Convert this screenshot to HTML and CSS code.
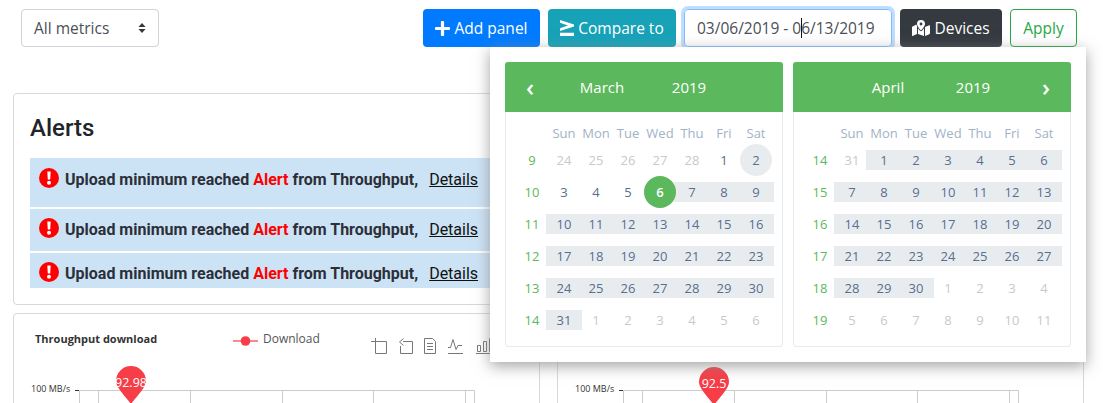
FILE: index.html
```html
<!DOCTYPE html>
<html lang="en">
<head>
<meta charset="utf-8">
<title>Dashboard</title>
<link rel="stylesheet" href="styles.css">
</head>
<body>
<div class="page">
  <header class="toolbar">
    <div class="select"><span>All metrics</span>
      <svg class="select-arrows" viewBox="0 0 8 10"><path d="M4 0l3.600 4H.4zM4 10L.4 6h7.200z"/></svg>
    </div>
    <div class="actions">
      <button class="btn btn-blue"><svg class="ico" viewBox="0 0 448 448"><path d="M416 176H272V32c0-17.670-14.330-32-32-32h-32c-17.670 0-32 14.330-32 32v144H32c-17.670 0-32 14.330-32 32v32c0 17.670 14.330 32 32 32h144v144c0 17.670 14.330 32 32 32h32c17.670 0 32-14.330 32-32V272h144c17.670 0 32-14.330 32-32v-32c0-17.670-14.330-32-32-32z"/></svg>Add panel</button>
      <button class="btn btn-teal"><svg class="ico ico-ge" viewBox="0 0 14 16"><path d="M0 0l14 4.500v2L0 11V8.300l8-2.800L0 2.700zM0 12.800h14V16H0z"/></svg>Compare to</button>
      <div class="range">03/06/2019 - 0<i class="caret"></i>6/13/2019</div>
      <button class="btn btn-dark"><svg class="ico ico-map" viewBox="0 0 18 16"><path d="M9 0a4 4 0 0 0-4 4c0 1.800 2.600 5 3.500 6.100a.6.6 0 0 0 1 0C10.400 9 13 5.800 13 4a4 4 0 0 0-4-4zm0 5.400A1.400 1.400 0 1 1 9 2.600a1.400 1.400 0 0 1 0 2.800zM.6 6.400A1 1 0 0 0 0 7.300v8.200c0 .4.400.6.700.5L5 14V6.100c-.3-.5-.5-1-.6-1.500zM9 11.200c-.5 0-.9-.2-1.200-.6-.6-.7-1.200-1.500-1.800-2.300V14l6 2V8.300c-.6.800-1.200 1.600-1.800 2.300-.3.400-.7.600-1.200.6zm8.300-6L13 7v9l4.400-1.800c.4-.1.600-.5.600-.9V5.700c0-.4-.4-.6-.7-.5z"/></svg>Devices</button>
      <button class="btn btn-apply">Apply</button>
    </div>
  </header>

  <main class="content">
    <section class="card alerts">
      <h3 class="alerts-title">Alerts</h3>
      <div class="alert alert-first">
        <svg class="alert-ico" viewBox="0 0 20 20"><circle cx="10" cy="10" r="10"/><path class="mark" d="M8.300 3.500h3.400l-.5 8h-2.400zM10 12.800a2 2 0 1 1 0 4 2 2 0 0 1 0-4z"/></svg>
        <p class="alert-text">Upload minimum reached <em>Alert</em> from Throughput,</p><a class="alert-link">Details</a>
      </div>
      <div class="alert alert-mid">
        <svg class="alert-ico" viewBox="0 0 20 20"><circle cx="10" cy="10" r="10"/><path class="mark" d="M8.300 3.500h3.400l-.5 8h-2.400zM10 12.800a2 2 0 1 1 0 4 2 2 0 0 1 0-4z"/></svg>
        <p class="alert-text">Upload minimum reached <em>Alert</em> from Throughput,</p><a class="alert-link">Details</a>
      </div>
      <div class="alert alert-last">
        <svg class="alert-ico" viewBox="0 0 20 20"><circle cx="10" cy="10" r="10"/><path class="mark" d="M8.300 3.500h3.400l-.5 8h-2.400zM10 12.800a2 2 0 1 1 0 4 2 2 0 0 1 0-4z"/></svg>
        <p class="alert-text">Upload minimum reached <em>Alert</em> from Throughput,</p><a class="alert-link">Details</a>
      </div>
    </section>

    <div class="charts">
      <section class="card chart">
        <div class="chart-head">
          <h4 class="chart-title">Throughput download</h4>
          <div class="legend"><svg class="legend-mark" viewBox="0 0 26 12"><path class="legend-line" d="M0 6h26"/><circle cx="13" cy="6" r="5"/></svg>Download</div>
          <svg class="chart-tools" viewBox="0 0 130 16">
            <path d="M0 3.500h15.500v12h-11V0"/>
            <path d="M32 3.500h9.500v12h-12V8M32.500 .5L28.500 4l4 3.500"/>
            <path d="M53.500 .5h8l3 3v12h-11zM56 5.500h6M56 8.500h6M56 11.500h6"/>
            <path d="M77 15.500h15M77 9.500h2.500l2.500-8 3 10 2-4h4"/>
            <path d="M105 15.500h24M106.500 7.500h3v6h-3zM112.500 3.500h3v10h-3zM118.500 .5h3v13h-3z"/>
          </svg>
        </div>
        <svg class="plot" viewBox="0 0 527 37">
          <path class="grid" d="M65.500 23.500h395M65.500 23.500v20M84.500 23.500v20M176.500 23.500v20M268.500 23.500v20M359.500 23.500v20M451.500 23.500v20M460.500 23.500v20"/>
          <path class="tick" d="M61 23.500h4"/>
          <text class="axis" x="17" y="24.500">100 MB/s</text>
          <path class="pin" d="M117-1a15 15 0 0 1 15 15c0 6-8 14-15 23-7-9-15-17-15-23a15 15 0 0 1 15-15z"/>
          <text class="pin-label" x="117" y="20">92.98</text>
        </svg>
      </section>
      <section class="card chart">
        <div class="chart-head">
          <h4 class="chart-title">Throughput upload</h4>
        </div>
        <svg class="plot" viewBox="0 0 527 37">
          <path class="grid" d="M65.500 23.500h395M65.500 23.500v20M84.500 23.500v20M176.500 23.500v20M268.500 23.500v20M359.500 23.500v20M451.500 23.500v20M460.500 23.500v20"/>
          <path class="tick" d="M61 23.500h4"/>
          <text class="axis" x="17" y="24.500">100 MB/s</text>
          <path class="pin" d="M156 0a15 15 0 0 1 15 15c0 6-8 14-15 23-7-9-15-17-15-23a15 15 0 0 1 15-15z"/>
          <text class="pin-label" x="156" y="21">92.5</text>
        </svg>
      </section>
    </div>
  </main>

  <div class="picker">
    <div class="month">
      <div class="month-head head-left"><span class="nav">‹</span><span>March</span><span>2019</span><span></span></div>
      <div class="days">
        <b class="dow"></b><b class="dow">Sun</b><b class="dow">Mon</b><b class="dow">Tue</b><b class="dow">Wed</b><b class="dow">Thu</b><b class="dow">Fri</b><b class="dow">Sat</b>
        <span class="wk">9</span><span class="off">24</span><span class="off">25</span><span class="off">26</span><span class="off">27</span><span class="off">28</span><span>1</span><span class="hover">2</span>
        <span class="wk">10</span><span>3</span><span>4</span><span>5</span><span class="start">6</span><span class="in">7</span><span class="in">8</span><span class="in">9</span>
        <span class="wk">11</span><span class="in">10</span><span class="in">11</span><span class="in">12</span><span class="in">13</span><span class="in">14</span><span class="in">15</span><span class="in">16</span>
        <span class="wk">12</span><span class="in">17</span><span class="in">18</span><span class="in">19</span><span class="in">20</span><span class="in">21</span><span class="in">22</span><span class="in">23</span>
        <span class="wk">13</span><span class="in">24</span><span class="in">25</span><span class="in">26</span><span class="in">27</span><span class="in">28</span><span class="in">29</span><span class="in">30</span>
        <span class="wk">14</span><span class="in">31</span><span class="off">1</span><span class="off">2</span><span class="off">3</span><span class="off">4</span><span class="off">5</span><span class="off">6</span>
      </div>
    </div>
    <div class="month">
      <div class="month-head head-right"><span></span><span>April</span><span>2019</span><span class="nav">›</span></div>
      <div class="days">
        <b class="dow"></b><b class="dow">Sun</b><b class="dow">Mon</b><b class="dow">Tue</b><b class="dow">Wed</b><b class="dow">Thu</b><b class="dow">Fri</b><b class="dow">Sat</b>
        <span class="wk">14</span><span class="off">31</span><span class="in">1</span><span class="in">2</span><span class="in">3</span><span class="in">4</span><span class="in">5</span><span class="in">6</span>
        <span class="wk">15</span><span class="in">7</span><span class="in">8</span><span class="in">9</span><span class="in">10</span><span class="in">11</span><span class="in">12</span><span class="in">13</span>
        <span class="wk">16</span><span class="in">14</span><span class="in">15</span><span class="in">16</span><span class="in">17</span><span class="in">18</span><span class="in">19</span><span class="in">20</span>
        <span class="wk">17</span><span class="in">21</span><span class="in">22</span><span class="in">23</span><span class="in">24</span><span class="in">25</span><span class="in">26</span><span class="in">27</span>
        <span class="wk">18</span><span class="in">28</span><span class="in">29</span><span class="in">30</span><span class="off">1</span><span class="off">2</span><span class="off">3</span><span class="off">4</span>
        <span class="wk">19</span><span class="off">5</span><span class="off">6</span><span class="off">7</span><span class="off">8</span><span class="off">9</span><span class="off">10</span><span class="off">11</span>
      </div>
    </div>
  </div>
</div>
</body>
</html>
```
FILE: styles.css
```css
* { box-sizing: border-box; }
html, body { margin: 0; padding: 0; background: #fff; }
body { font-family: "Open Sans", "Noto Sans", sans-serif; color: #212529; }
.page { position: relative; width: 1103px; height: 403px; overflow: hidden; }

.toolbar { display: flex; justify-content: space-between; padding: 9px 26px 0 21px; height: 47px; }
.select { width: 138px; height: 38px; border: 1px solid #ced4da; border-radius: 4px; display: flex; align-items: center; justify-content: space-between; padding: 0 12px 0 12px; font-size: 15.500px; color: #495057; }
.select-arrows { width: 8px; height: 10px; fill: #343a40; }
.actions { display: flex; gap: 8px; }
.btn { height: 38px; border: 1px solid transparent; border-radius: 4px; font: 400 15.500px "Open Sans", sans-serif; color: #fff; padding: 0; display: flex; align-items: center; justify-content: center; gap: 4px; }
.ico { height: 15px; width: 15px; fill: #fff; }
.ico-ge { width: 14px; height: 16px; }
.ico-map { width: 18px; height: 16px; }
.btn-blue { width: 117px; background: #007bff; }
.btn-teal { width: 128px; background: #17a2b8; }
.btn-dark { width: 102px; background: #343a40; }
.btn-apply { width: 67px; background: #fff; border-color: #28a745; color: #28a745; }
.range { width: 208px; height: 38px; border: 1px solid #80bdff; border-radius: 4px; box-shadow: 0 0 0 3px rgba(0,123,255,.25); display: flex; align-items: center; padding-left: 12px; font-size: 15.500px; color: #495057; white-space: pre; }
.caret { width: 1px; height: 20px; background: #111; margin: 0 -1px 0 0; }

.content { padding: 46px 19px 0 13px; }
.card { background: #fff; border: 1px solid #d6d8da; border-radius: 4px; }
.alerts { height: 212px; padding: 0 16px; margin-bottom: 8px; }
.alerts-title { margin: 19px 0 0; height: 45px; font: 500 24px/30px Roboto, sans-serif; color: #212529; }
.alert { display: flex; align-items: flex-start; background: #cce3f6; font: 700 16px/24px Roboto, sans-serif; color: #2c2f38; padding-left: 9px; margin-bottom: 2px; }
.alert-first { height: 49px; padding-top: 10px; }
.alert-mid { height: 42px; padding-top: 9px; }
.alert-last { height: 35px; padding-top: 9px; margin-bottom: 0; }
.alert-ico { width: 20px; height: 20px; margin-right: 6px; flex: none; fill: #f00; }
.mark { fill: #fff; }
.alert-text { margin: 0 11px 0 0; }
.alert-text em { font-style: normal; color: #f00; }
.alert-link { font-weight: 400; color: #111; text-decoration: underline; }

.charts { display: grid; grid-template-columns: 527px 527px; gap: 17px; }
.chart { height: 120px; overflow: hidden; }
.chart-head { display: flex; height: 53px; padding: 16px 0 0 21px; }
.chart-title { margin: 0; width: 198px; font: 700 11px/18px "Open Sans", sans-serif; color: #333; }
.legend { display: flex; align-items: flex-start; gap: 5px; font-size: 12px; line-height: 18px; color: #555; width: 138px; }
.legend-mark { width: 25px; height: 12px; margin-top: 5px; fill: #f73d47; }
.legend-line { stroke: #f98a90; stroke-width: 2; fill: none; }
.chart-tools { width: 130px; height: 16px; flex: none; margin-top: 8px; fill: none; stroke: #777; stroke-width: 1; }
.plot { display: block; width: 527px; height: 37px; overflow: visible; }
.grid { stroke: #ccc; stroke-width: 1; fill: none; }
.tick { stroke: #333; stroke-width: 1; fill: none; }
.axis { font: 9px "Open Sans", sans-serif; fill: #333; }
.pin { fill: #f73d47; }
.pin-label { font: 12.500px "Open Sans", sans-serif; fill: #fff; text-anchor: middle; }

.picker { position: absolute; left: 490px; top: 47px; width: 596px; height: 315px; background: #fff; box-shadow: 0 4px 14px rgba(140,140,140,.8); padding: 15px; display: flex; gap: 10px; }
.month { width: 278px; height: 285px; border: 1px solid #e9ecef; border-top: 0; border-radius: 4px; }
.month-head { height: 50px; margin: 0 -1px; background: #5cb85c; color: #fff; font-size: 15px; display: grid; align-items: center; border-radius: 3px 3px 0 0; text-align: center; }
.head-left { grid-template-columns: 50px 94px 80px 54px; }
.head-right { grid-template-columns: 50px 90px 80px 58px; }
.nav { font-size: 24px; line-height: 24px; font-weight: 600; }
.head-right .nav { padding-left: 8px; }
.days { display: grid; grid-template-columns: repeat(8, 32px); grid-auto-rows: 32px; padding: 11px 0 0 10px; grid-template-rows: 21px; font-size: 13px; color: #54708f; }
.days span { position: relative; z-index: 0; display: flex; align-items: center; justify-content: center; }
.dow { font-weight: 400; font-size: 13px; color: #a2b2c8; text-align: center; line-height: 21px; }
.days .wk { color: #5cb85c; }
.days .off { color: #c9c9c9; }
.days .hover { background: #e9ecef; border-radius: 50%; }
.days .start { background: #5cb85c; color: #fff; border-radius: 50%; font-weight: 600; z-index: 1; }
.in::before { content: ""; position: absolute; left: -2px; right: -2px; top: 6px; bottom: 6px; background: #e9ecef; z-index: -1; }
```
